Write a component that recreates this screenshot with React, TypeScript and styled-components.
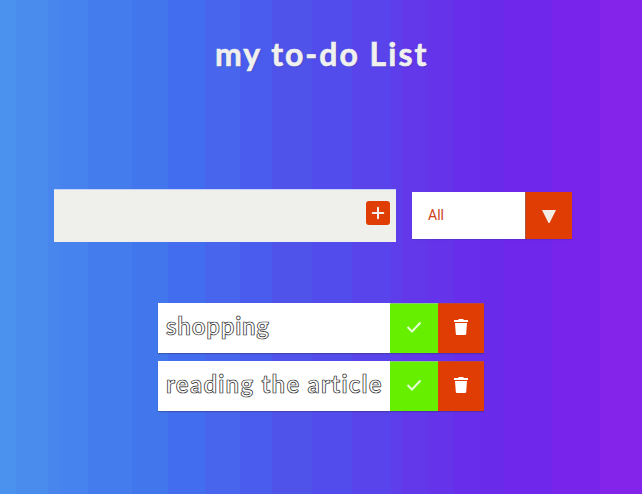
import React from "react";
import styled, { createGlobalStyle } from "styled-components";

const bands: [string, number][] = [
  ["#4b92ee", 16], ["#4a8cee", 48], ["#4886ee", 60], ["#4783ee", 88],
  ["#447cee", 132], ["#4276ec", 168], ["#426dee", 205], ["#4765ed", 240],
  ["#4a5ced", 272], ["#5053ea", 312], ["#534cec", 352], ["#5943ea", 391],
  ["#5e3eea", 402], ["#6338ea", 428], ["#6534ea", 454], ["#682dea", 480],
  ["#6a2aea", 504], ["#6f27eb", 552], ["#7824eb", 600], ["#8423e9", 642],
];
const gradient = bands
  .map(([c, end], i) => `${c} ${i ? bands[i - 1][1] : 0}px ${end}px`)
  .join(", ");

const GlobalStyle = createGlobalStyle`
  * { box-sizing: border-box; }
  body { margin: 0; overflow: hidden; }
`;
const Page = styled.main`
  display: flex;
  flex-direction: column;
  width: 642px;
  height: 494px;
  background: linear-gradient(90deg, ${gradient});
  font-family: "Lato", sans-serif;
`;
const Header = styled.header`
  height: 189px;
  padding: 34px 0 0 215px;
`;
const Title = styled.h1`
  margin: 0;
  font-size: 32px;
  line-height: 40px;
  font-weight: 700;
  letter-spacing: 2px;
  color: #f0f1ef;
  white-space: nowrap;
  -webkit-text-stroke: 0.6px #f0f1ef;
  text-shadow: 1px 1px 1px #3c3b8066;
`;
const Controls = styled.form`
  display: flex;
  align-items: center;
  gap: 16px;
  height: 53px;
  padding-left: 54px;
`;
const Entry = styled.div`
  display: flex;
  align-items: center;
  justify-content: flex-end;
  width: 342px;
  height: 53px;
  padding: 0 6px 7px 0;
  background: #eff0eb;
  border-top: 1px solid #c5d2f5;
`;
const AddButton = styled.button`
  display: grid;
  place-items: center;
  width: 24px;
  height: 24px;
  padding: 0;
  border: 0;
  border-radius: 3px;
  background: #df3d04;
`;
const Filter = styled.div`
  display: flex;
  width: 160px;
  height: 47px;
  background: #fff;
  box-shadow: 0 1px 1px #30309044;
`;
const FilterValue = styled.span`
  width: 113px;
  padding-left: 16px;
  font: 14px/47px "Roboto", sans-serif;
  color: #ce3e18;
`;
const FilterArrow = styled.span`
  display: grid;
  place-items: center;
  width: 47px;
  background: #df3d04;
  border-left: 1px solid #a95843;
`;
const List = styled.ul`
  display: flex;
  flex-direction: column;
  gap: 8px;
  width: 326px;
  margin: 61px 0 0 158px;
  padding: 0;
  list-style: none;
`;
const Item = styled.li`
  display: flex;
  height: 50px;
  background: #fff;
  box-shadow: 0 1px 1px #30306066;
`;
const ItemText = styled.span<{ $spacing: number }>`
  width: 232px;
  padding-left: 8px;
  font-size: 24px;
  line-height: 46px;
  letter-spacing: ${(p) => p.$spacing}px;
  font-weight: 700;
  color: #fff;
  -webkit-text-stroke: 0.7px #222;
  white-space: nowrap;
`;
const ItemAction = styled.button<{ $kind: "done" | "remove" }>`
  display: grid;
  place-items: center;
  width: ${(p) => (p.$kind === "done" ? 48 : 46)}px;
  padding: 0 0 4px;
  border: 0;
  border-top: 1px solid ${(p) => (p.$kind === "done" ? "#85cc78" : "#bd4936")};
  background: ${(p) => (p.$kind === "done" ? "#66f000" : "#df3d04")};
`;

const todos = [
  { text: "shopping", spacing: 0.8 },
  { text: "reading the article", spacing: 1.26 },
];

export default function App() {
  return (
    <>
      <GlobalStyle />
      <Page>
        <Header><Title>my to-do List</Title></Header>
        <Controls>
          <Entry>
            <AddButton type="button" aria-label="Add">
              <svg width="24" height="24" viewBox="0 0 24 24">
                <path d="M12 6.7v10.6M6.7 12h10.6" stroke="#f3eee7" strokeWidth="2" strokeLinecap="round" />
              </svg>
            </AddButton>
          </Entry>
          <Filter>
            <FilterValue>All</FilterValue>
            <FilterArrow>
              <svg width="14" height="14" viewBox="0 0 14 14">
                <path d="M0 0H14L7 14Z" fill="#f2eee5" transform="translate(0 1)" />
              </svg>
            </FilterArrow>
          </Filter>
        </Controls>
        <List>
          {todos.map((t) => (
            <Item key={t.text}>
              <ItemText $spacing={t.spacing}>{t.text}</ItemText>
              <ItemAction $kind="done" aria-label="Complete">
                <svg width="16" height="16" viewBox="0 0 16 16">
                  <path d="M1.5 8L6 12.5L14.5 3.5" fill="none" stroke="#e4fbd3" strokeWidth="2" />
                </svg>
              </ItemAction>
              <ItemAction $kind="remove" aria-label="Delete">
                <svg width="16" height="18" viewBox="0 0 16 18">
                  <path d="M1 2H5L6 1H10L11 2H15V4H1ZM2 5H14L13.2 15.7Q13.1 17 12 17H4Q2.9 17 2.8 15.7Z" fill="#fff" />
                </svg>
              </ItemAction>
            </Item>
          ))}
        </List>
      </Page>
    </>
  );
}
